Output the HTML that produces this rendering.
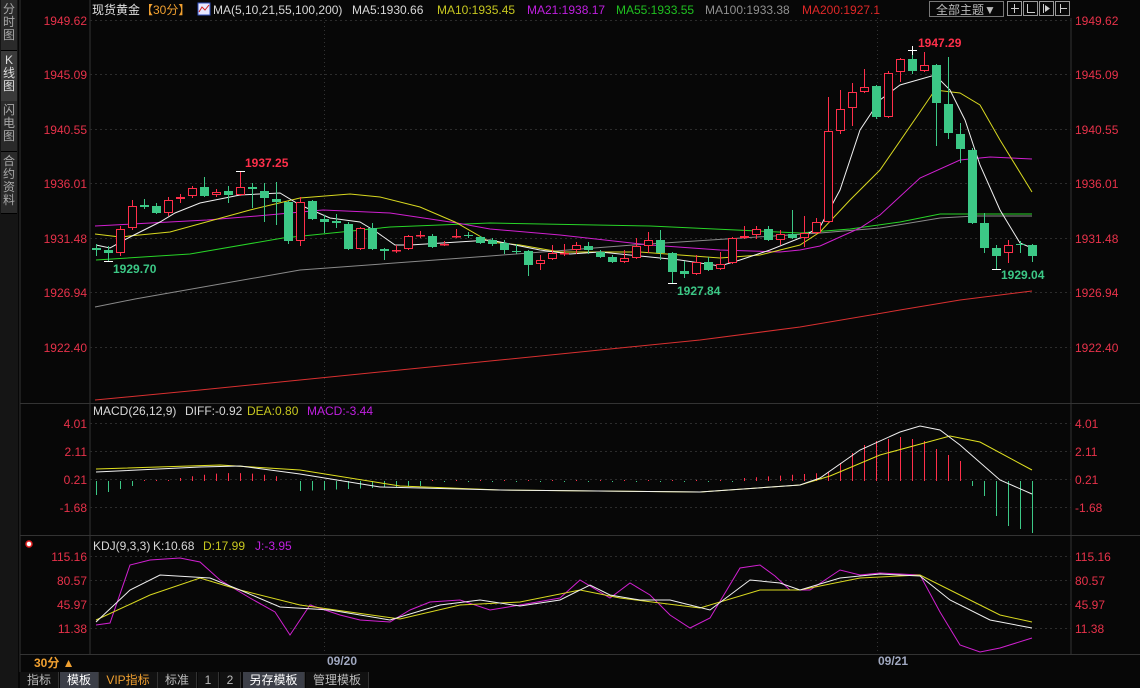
<!DOCTYPE html>
<html><head><meta charset="utf-8">
<style>
html,body{margin:0;padding:0;background:#070707;width:1140px;height:688px;overflow:hidden;font-family:"Liberation Sans","Noto Sans CJK SC",sans-serif;}
#side{position:absolute;left:0;top:0;width:18px;height:688px;background:#151515;}
.st{position:absolute;left:1px;width:16px;color:#a8a8a8;font-size:12px;line-height:13px;text-align:center;background:#2a2a2a;border-bottom:1px solid #000;padding-top:3px;}
svg{position:absolute;left:0;top:0}
.tab{position:absolute;top:672px;height:16px;font-size:12px;line-height:16px;color:#bbb;text-align:center;background:#111;border-right:1px solid #333}
</style></head><body>
<div id="side">
<div class="st" style="top:0;height:47px">分<br>时<br>图</div>
<div class="st" style="top:51px;height:47px;background:#3a3a3a;color:#ddd">K<br>线<br>图</div>
<div class="st" style="top:101px;height:47px">闪<br>电<br>图</div>
<div class="st" style="top:152px;height:58px">合<br>约<br>资<br>料</div>
</div>
<svg id="s" width="1140" height="688" xmlns="http://www.w3.org/2000/svg"></svg>
<div class="tab" style="left:20px;width:38px">指标</div>
<div class="tab" style="left:60px;width:38px;background:#3c3f48;color:#fff">模板</div>
<div class="tab" style="left:99px;width:58px;color:#f0a030">VIP指标</div>
<div class="tab" style="left:158px;width:38px">标准</div>
<div class="tab" style="left:198px;width:20px">1</div>
<div class="tab" style="left:220px;width:20px">2</div>
<div class="tab" style="left:243px;width:61px;background:#3c3f48;color:#fff">另存模板</div>
<div class="tab" style="left:306px;width:62px">管理模板</div>
<script>
var s='';
function L(x1,y1,x2,y2,c,d){s+='<line x1="'+x1+'" y1="'+y1+'" x2="'+x2+'" y2="'+y2+'" stroke="'+c+'" stroke-width="1"'+(d?' stroke-dasharray="'+d+'"':'')+'/>';}
function T(x,y,t,c,sz,a,w){s+='<text x="'+x+'" y="'+y+'" fill="'+c+'" font-size="'+(sz||12)+'"'+(a?' text-anchor="'+a+'"':'')+(w?' font-weight="bold"':'')+'>'+t+'</text>';}
function P(pts,c){s+='<polyline fill="none" stroke="'+c+'" stroke-width="1" points="'+pts.map(function(p){return p.join(',')}).join(' ')+'"/>';}
var R='#ff2f4a',G='#3cc886';
L(20,0,20,672,'#333');L(90,0,90,654,'#333');L(1071,18,1071,654,'#333');
L(20,403.5,1140,403.5,'#333');L(20,535.5,1140,535.5,'#333');L(20,654.5,1140,654.5,'#333');
L(324.5,18,324.5,654,'#333','1,3');L(877.5,18,877.5,654,'#333','1,3');
var pl=[[20,'1949.62'],[74,'1945.09'],[129,'1940.55'],[183,'1936.01'],[238,'1931.48'],[292,'1926.94'],[347,'1922.40']];
pl.forEach(function(p){L(90,p[0]+0.5,1071,p[0]+0.5,'#2c2c2c','2,3');T(87,p[0]+5,p[1],'#e8324a',12,'end');T(1075,p[0]+5,p[1],'#e8324a',12);});
var ml=[[423,'4.01'],[451,'2.11'],[479,'0.21'],[507,'-1.68']];
ml.forEach(function(p){L(90,p[0]+0.5,1071,p[0]+0.5,'#2c2c2c','2,3');T(87,p[0]+5,p[1],'#e8324a',12,'end');T(1075,p[0]+5,p[1],'#e8324a',12);});
var kl=[[556,'115.16'],[580,'80.57'],[604,'45.97'],[628,'11.38']];
kl.forEach(function(p){L(90,p[0]+0.5,1071,p[0]+0.5,'#2c2c2c','2,3');T(87,p[0]+5,p[1],'#e8324a',12,'end');T(1075,p[0]+5,p[1],'#e8324a',12);});
var C=[[248,250,244,256,0],[250,253,246,261,0],[253,229,226,256,1],[228,206,200,230,1],[205,207,199,209,0],[206,213,203,214,0],[213,200,197,216,1],[199,197,194,203,1],[196,188,186,198,1],[187,196,177,197,0],[195,192,189,197,1],[191,195,186,203,0],[195,187,171,196,1],[187,189,183,208,0],[191,198,183,222,0],[199,202,182,225,0],[202,241,201,244,0],[241,202,197,246,1],[201,219,200,220,0],[219,222,215,233,0],[221,223,214,228,0],[224,249,222,250,0],[249,228,227,250,1],[228,249,223,250,0],[249,251,248,260,0],[251,250,245,253,1],[249,236,235,250,1],[236,235,231,238,1],[236,247,234,248,0],[245,244,241,246,1],[237,236,229,238,1],[235,236,232,238,0],[237,243,236,244,0],[240,244,238,246,0],[243,250,240,254,0],[251,251,244,254,0],[251,265,250,276,0],[264,260,255,270,1],[259,253,245,260,1],[254,253,244,256,1],[250,245,242,254,1],[246,250,242,254,0],[252,257,250,258,0],[257,262,255,263,0],[262,258,250,263,1],[258,246,238,259,1],[246,240,232,253,1],[240,253,230,260,0],[253,272,252,283,0],[271,274,261,278,0],[274,262,255,275,1],[262,270,257,271,0],[269,264,252,270,1],[263,238,237,264,1],[238,236,226,239,1],[235,229,226,239,1],[229,240,226,241,0],[240,234,230,245,1],[234,238,210,239,0],[238,233,216,247,1],[233,222,218,234,1],[222,131,97,223,1],[131,109,90,134,1],[108,92,83,126,1],[92,87,69,93,1],[86,117,85,119,0],[117,73,71,118,1],[72,59,58,82,1],[59,71,50,74,0],[71,65,52,72,1],[65,103,64,146,0],[104,133,57,139,0],[134,149,123,163,0],[150,223,148,224,0],[223,248,213,253,0],[248,256,245,269,0],[253,245,240,263,1],[244,244,241,253,0],[245,256,244,262,0]];
P([[95,400],[200,390],[300,380],[500,360],[700,340],[800,327],[900,310],[960,300],[1032,291]],'#d83030');
P([[95,307],[135,299],[300,270],[490,256],[633,245],[820,233],[880,228],[940,218],[975,216],[1032,216]],'#8a8a8a');
P([[96,260],[190,254],[283,238],[390,227],[490,223],[650,226],[800,233],[850,229],[900,222],[940,214],[1032,214]],'#28d428');
P([[95,226],[207,220],[257,216],[323,210],[390,213],[457,223],[490,229],[560,235],[650,245],[720,250],[780,252],[800,250],[820,246],[860,228],[880,215],[920,178],[960,160],[990,157],[1032,159]],'#d020d0');
P([[95,234],[120,237],[170,232],[250,210],[300,198],[350,194],[380,197],[420,207],[455,222],[490,242],[520,245],[560,252],[640,252],[720,258],[760,255],[800,245],[820,232],[850,200],[880,170],[920,112],[935,90],[960,93],[980,105],[1000,140],[1032,192]],'#d8d820');
P([[96,245],[110,248],[130,237],[160,222],[175,213],[200,203],[240,195],[280,193],[300,205],[330,218],[360,222],[375,231],[395,245],[410,245],[490,240],[520,246],[540,250],[570,254],[600,252],[680,260],[720,266],[740,260],[770,250],[800,238],[820,227],[840,190],[860,130],[880,100],[900,85],[935,75],[950,90],[965,120],[980,165],[1000,210],[1020,243],[1032,248]],'#f0f0f0');
C.forEach(function(c,i){var x=96+12*i,t=Math.min(c[0],c[1]),b=Math.max(c[0],c[1]),col=c[4]?R:G;
 L(x+0.5,c[2],x+0.5,t,col);L(x+0.5,b,x+0.5,c[3],col);
 var h=Math.max(b-t,1);
 if(c[4])s+='<rect x="'+(x-3.5)+'" y="'+(t+0.5)+'" width="8" height="'+Math.max(h-1,0.5)+'" fill="#070707" stroke="'+col+'" stroke-width="1"/>';
 else s+='<rect x="'+(x-4)+'" y="'+t+'" width="9" height="'+h+'" fill="'+col+'"/>';
});
L(236,171.5,245,171.5,'#fff');L(104,261.5,113,261.5,'#fff');L(668,283.5,677,283.5,'#fff');L(908,50.5,917,50.5,'#fff');L(992,269.5,1001,269.5,'#fff');L(912.5,46,912.5,55,'#fff');
T(245,167,'1937.25',R,12,null,1);T(113,273,'1929.70',G,12,null,1);T(677,295,'1927.84',G,12,null,1);T(918,47,'1947.29',R,12,null,1);T(1001,279,'1929.04',G,12,null,1);
T(92,14,'现货黄金','#e0e0e0',12);T(141,14,'【30分】','#f0a030',12);
s+='<rect x="198" y="3" width="12" height="12" fill="#e8e8ff" stroke="#3050c0"/><polyline points="199,12 202,7 205,10 209,5" fill="none" stroke="#d02020"/>';
T(213,14,'MA(5,10,21,55,100,200)','#d8d8d8',12);T(352,14,'MA5:1930.66','#d8d8d8',12);T(437,14,'MA10:1935.45','#c8c820',12);T(527,14,'MA21:1938.17','#c020e0',12);T(616,14,'MA55:1933.55','#20c020',12);T(705,14,'MA100:1933.38','#909090',12);T(802,14,'MA200:1927.1','#e02828',12);
s+='<rect x="929.5" y="1.5" width="74" height="15" fill="none" stroke="#777"/>';T(966,14,'全部主题▼','#bbb',12,'middle');
[1007,1023,1039,1055].forEach(function(x){s+='<rect x="'+(x+.5)+'" y="1.5" width="14" height="14" fill="none" stroke="#999"/>';});
L(1011,8.5,1019,8.5,'#ccc');L(1014.5,4,1014.5,13,'#ccc');L(1027.5,4,1027.5,13,'#ccc');L(1027,12.5,1035,12.5,'#ccc');L(1043.5,4,1043.5,13,'#ccc');s+='<polygon points="1045,5 1050,8.5 1045,12" fill="#ccc"/>';L(1060.5,4,1060.5,13,'#ccc');L(1060,8.5,1067,8.5,'#ccc');
T(93,415,'MACD(26,12,9)','#d8d8d8',12);T(185,415,'DIFF:-0.92','#d8d8d8',12);T(247,415,'DEA:0.80','#c8c820',12);T(307,415,'MACD:-3.44','#c020e0',12);
var Z=481;
for(var i=0;i<79;i++){var x=96+12*i+0.5,v;
 if(i<4)v=-(14-i*3);else if(i<7)v=1;else if(i<16)v=3+Math.sin((i-7)/9*3.14)*5;else if(i<17)v=0;else if(i<28)v=-(10-(i-17)*0.5);else if(i<54)v=(i%2?-1:1);else if(i<62)v=3+(i-54)*0.8;else v=0;
 if(i>=62&&i<73){v=[18,28,36,40,42,44,42,40,32,26,20][i-62];}
 if(i>=73){v=[-5,-15,-35,-45,-48,-52][i-73];}
 if(Math.abs(v)<0.8)continue;
 L(x,Z,x,Z-v,v>0?R:G);}
P([[96,469],[220,465],[300,470],[400,486],[500,490],[700,492],[800,485],[830,476],[880,455],[950,436],[980,442],[1032,470]],'#e0e020');
P([[96,472],[200,467],[240,466],[300,474],[380,487],[500,490],[700,492],[800,485],[820,478],[860,450],[900,432],[920,426],[940,430],[960,445],[1000,480],[1032,494]],'#f0f0f0');
s+='<circle cx="29" cy="544" r="3" fill="#fff" stroke="#e02020" stroke-width="1.5"/>';
T(93,550,'KDJ(9,3,3)','#d8d8d8',12);T(153,550,'K:10.68','#d8d8d8',12);T(203,550,'D:17.99','#c8c820',12);T(255,550,'J:-3.95','#c020e0',12);
P([[96,625],[110,623],[130,565],[150,560],[180,558],[200,562],[220,580],[250,598],[275,612],[290,635],[310,605],[340,615],[360,620],[390,622],[410,610],[430,602],[460,600],[490,610],[520,605],[560,598],[580,580],[610,598],[630,583],[650,595],[670,615],[690,628],[710,618],[740,568],[760,565],[775,576],[790,590],[810,590],[840,570],[860,575],[880,573],[920,575],[940,612],[960,645],[980,652],[1000,648],[1032,638]],'#d020d0');
P([[96,620],[150,595],[200,578],[240,590],[300,605],[400,619],[460,605],[520,602],[580,590],[620,598],[700,608],[760,590],[800,590],[860,578],[920,575],[960,595],[1000,615],[1032,622]],'#d8d820');
P([[96,622],[130,590],[160,575],[210,578],[240,590],[280,607],[330,610],[390,620],[440,605],[480,600],[520,606],[560,600],[590,585],[610,595],[640,600],[670,600],[710,610],[750,580],[780,583],[800,590],[840,578],[880,574],[920,576],[950,600],[990,620],[1032,628]],'#f0f0f0');
T(34,667,'30分 ▲','#f0a030',12,null,1);T(327,665,'09/20','#a0a8c0',12,null,1);T(878,665,'09/21','#a0a8c0',12,null,1);
document.getElementById('s').innerHTML=s;
</script>
</body></html>
